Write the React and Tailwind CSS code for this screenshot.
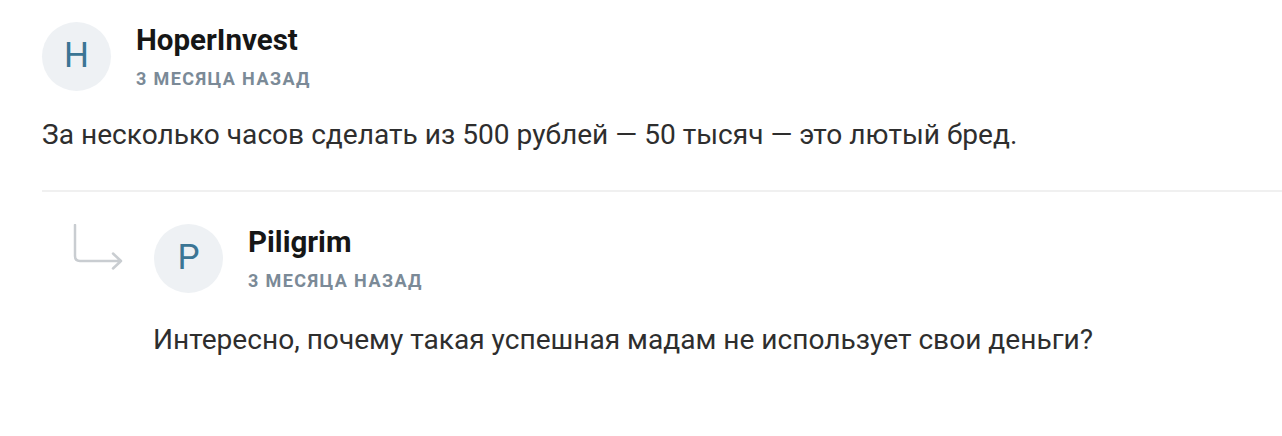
const comments = {
  id: 1,
  author: "HoperInvest",
  date: "3 месяца назад",
  text: "За несколько часов сделать из 500 рублей — 50 тысяч — это лютый бред.",
  reply: {
    author: "Piligrim",
    date: "3 месяца назад",
    text: "Интересно, почему такая успешная мадам не использует свои деньги?",
  },
};

function Avatar({ name }) {
  return (
    <div className="w-[69px] h-[69px] shrink-0 rounded-full bg-[#eef1f4] flex items-center justify-center text-[35px] text-[#3b7594]">
      {name[0]}
    </div>
  );
}

function Head({ author, date }) {
  return (
    <div className="flex items-start gap-[25px]">
      <Avatar name={author} />
      <div>
        <p className="text-[29.5px] leading-[36px] font-bold text-[#161616]">{author}</p>
        <p className="mt-[9px] text-[18px] leading-[24px] font-bold uppercase tracking-[1.4px] text-[#7b8a97]">{date}</p>
      </div>
    </div>
  );
}

function ReplyArrow() {
  return (
    <svg width="56" height="50" viewBox="0 0 56 50" fill="none" className="shrink-0">
      <path
        d="M4 1 V32 Q4 37 9 37 H50 M42 29.5 L50 37 L42 44.5"
        stroke="#c9cdd1"
        strokeWidth="2.5"
        strokeLinecap="round"
        strokeLinejoin="round"
      />
    </svg>
  );
}

export default function App() {
  const c = comments;
  return (
    <div className="bg-white w-[1282px] h-[436px] overflow-hidden font-['Roboto',sans-serif]">
      <div className="pl-[42px] pt-[22px]">
        <Head author={c.author} date={c.date} />
        <p className="mt-[26px] text-[28.1px] leading-[36px] text-[#2e2e2e]">{c.text}</p>
        <div className="mt-[37px] h-[2px] bg-[#f0f0f0]" />
        <div className="pt-[32px] pl-[29px] flex gap-[27px]">
          <ReplyArrow />
          <Head author={c.reply.author} date={c.reply.date} />
        </div>
        <p className="ml-[111px] mt-[29px] text-[28.1px] leading-[36px] text-[#2e2e2e]">{c.reply.text}</p>
      </div>
    </div>
  );
}
